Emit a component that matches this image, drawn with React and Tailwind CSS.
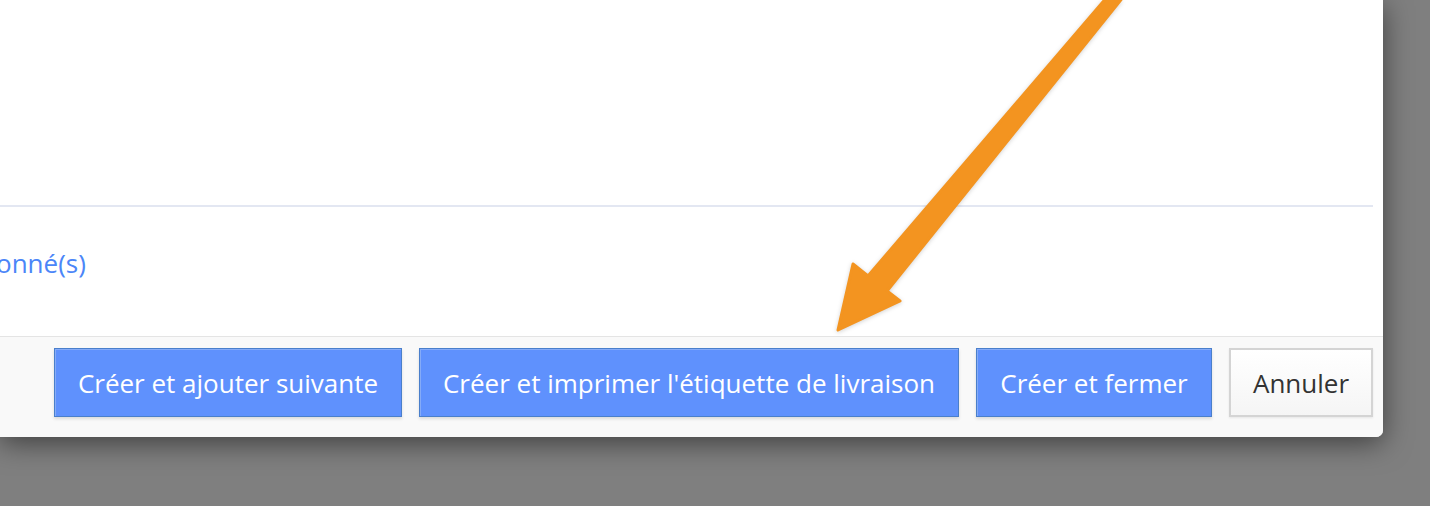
import React from "react";

const PrimaryButton = ({ label, width }) => (
  <button
    className={`${width} h-[69px] shrink-0 border border-[#4a7fcb] bg-[#5f91fd] text-[26px] leading-[36px] text-white shadow-[inset_1px_1px_0_#85abf8,0_2px_3px_rgba(0,0,0,0.12)]`}
  >
    {label}
  </button>
);

const Arrow = () => (
  <svg
    className="pointer-events-none absolute left-0 top-0 drop-shadow-[0_1px_2px_rgba(0,0,0,0.18)]"
    width="1430"
    height="506"
    viewBox="0 0 1430 506"
  >
    <polygon
      points="1108,-4 1124,-4 887,291 900,301 838,330 853,264 868,276"
      fill="#f39420"
      stroke="#f39420"
      strokeWidth="3"
      strokeLinejoin="round"
    />
  </svg>
);

export default function App() {
  return (
    <div className="relative h-[506px] w-[1430px] overflow-hidden bg-[#7f7f7f] font-['Open_Sans',sans-serif]">
      {/* Modal */}
      <div className="flex h-[437px] w-[1383px] flex-col overflow-hidden rounded-br-[7px] bg-white shadow-[0_6px_28px_rgba(0,0,0,0.5)]">
        <div className="h-[205px]" />
        <div className="mr-[10px] border-t-2 border-[#e3e7f2]" />

        {/* Selection link */}
        <div className="flex-1 pt-[38px]">
          <span className="-ml-[4px] block text-[26px] leading-[36px] text-[#4b86f8]">
            onné(s)
          </span>
        </div>

        {/* Footer */}
        <div className="flex h-[101px] items-start justify-end gap-[17px] border-t border-[#e4e4e4] bg-[#f9f9f9] pr-[10px] pt-[11px]">
          <PrimaryButton label="Créer et ajouter suivante" width="w-[348px]" />
          <PrimaryButton
            label="Créer et imprimer l'étiquette de livraison"
            width="w-[540px]"
          />
          <PrimaryButton label="Créer et fermer" width="w-[236px]" />
          <button className="h-[69px] w-[144px] shrink-0 border-2 border-[#d4d4d4] bg-gradient-to-b from-white to-[#f5f5f5] text-[26px] leading-[36px] text-[#333333] shadow-[0_1px_2px_rgba(0,0,0,0.08)]">
            Annuler
          </button>
        </div>
      </div>

      <Arrow />
    </div>
  );
}
